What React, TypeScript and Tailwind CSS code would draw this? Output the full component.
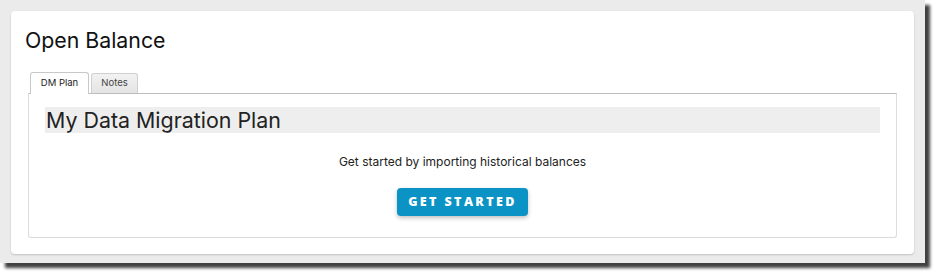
import React from "react";

export default function App() {
  return (
    <div className="w-[936px] h-[274px] bg-white overflow-hidden" style={{ fontFamily: "Inter, 'Noto Sans', sans-serif" }}>
      <div className="w-[925px] h-[263px] bg-[#ebebeb] pt-[11px] pl-[11px] shadow-[5px_5px_3px_rgba(0,0,0,0.75)]">
        <div className="w-[903px] h-[243px] bg-white rounded-[4px] shadow-[0_1px_2px_rgba(0,0,0,0.18)] flex flex-col">
          <h1 className="pl-[14px] pt-[15px] text-[21.3px] leading-[28px] text-[#111] font-normal">Open Balance</h1>
          <div className="mx-[17px] mt-[17px] flex flex-col flex-1 mb-[16px]">
            <div className="flex items-end pl-[2px] gap-[2px] h-[22px]">
              <div className="h-[22px] w-[59px] border border-b-0 border-[#c8c8c8] rounded-t-[3px] bg-white text-[9.5px] text-[#222] flex items-center justify-center relative top-[1px]">
                DM Plan
              </div>
              <div className="h-[20px] w-[47px] border border-b-0 border-[#d0d0d0] rounded-t-[3px] bg-gradient-to-b from-[#f2f2f2] to-[#e4e4e4] text-[9.5px] text-[#444] flex items-center justify-center">
                Notes
              </div>
            </div>
            <div className="flex-1 border border-[#dcdcdc] border-t-[#bdbdbd] rounded-b-[3px] pt-[13px] px-[16px] flex flex-col items-center">
              <div className="w-full h-[26px] bg-[#eeeeee] text-[21.4px] leading-[26px] text-[#222] pl-[1px]">
                My Data Migration Plan
              </div>
              <p className="mt-[21px] text-[12px] leading-[16px] text-[#222]">Get started by importing historical balances</p>
              <button className="mt-[18px] w-[131px] h-[28px] rounded-[4px] bg-[#0a93c4] text-white text-[12.5px] font-extrabold tracking-[2.4px] shadow-[0_2px_4px_rgba(0,0,0,0.25)] flex items-center justify-center" style={{ fontFamily: "'Open Sans', sans-serif" }}>
                GET STARTED
              </button>
            </div>
          </div>
        </div>
      </div>
    </div>
  );
}
